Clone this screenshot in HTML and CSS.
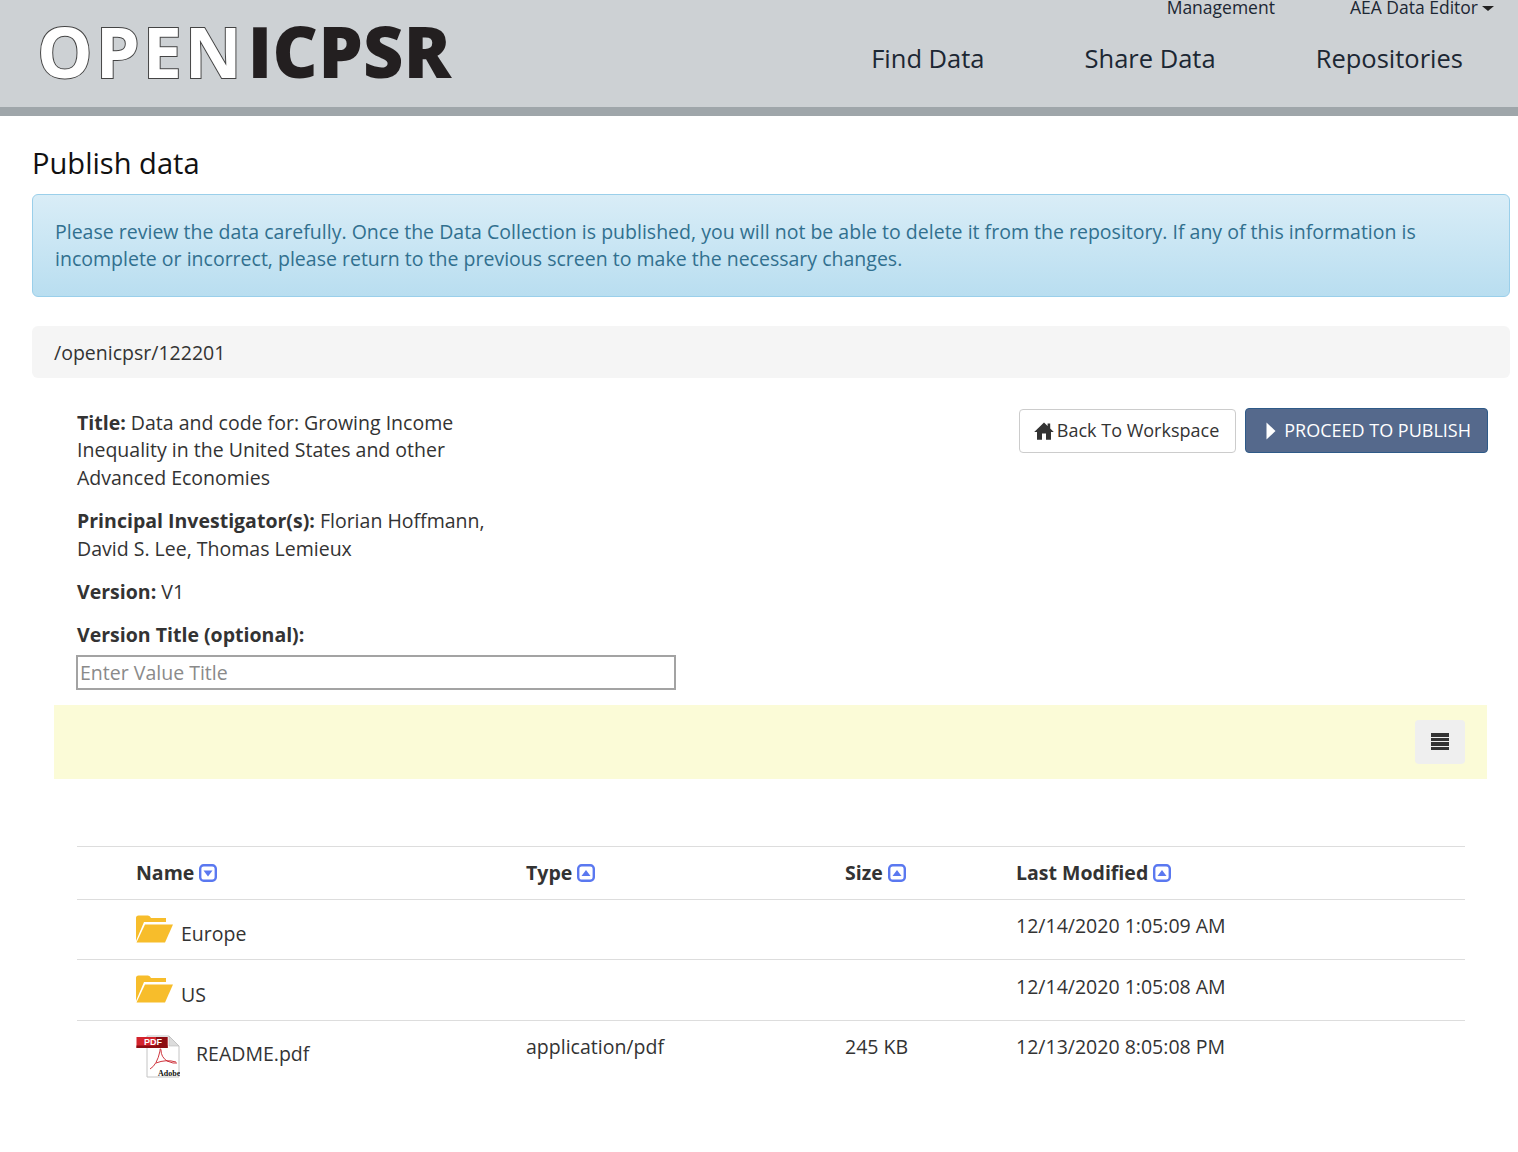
FILE: index.html
```html
<!DOCTYPE html>
<html>
<head>
  <title>Publish data - openICPSR</title>
  <link rel="stylesheet" href="styles.css">
</head>
<body>

  <header class="site-header">
    <div class="logo"><span class="logo-open">OPEN</span><span class="logo-icpsr">ICPSR</span></div>
    <div class="header-nav">
      <div class="util-nav">
        <a class="util-management">Management</a>
        <a class="util-user">AEA Data Editor<span class="caret"></span></a>
      </div>
      <nav class="main-nav">
        <a>Find Data</a>
        <a>Share Data</a>
        <a>Repositories</a>
      </nav>
    </div>
  </header>

  <main class="page">
    <h1>Publish data</h1>

    <div class="alert">Please review the data carefully. Once the Data Collection is published, you will not be able to delete it from the repository. If any of this information is incomplete or incorrect, please return to the previous screen to make the necessary changes.</div>

    <div class="breadcrumb">/openicpsr/122201</div>

    <section class="details">
      <div class="meta">
        <p><b>Title:</b> Data and code for: Growing Income Inequality in the United States and other Advanced Economies</p>
        <p><b>Principal Investigator(s):</b> Florian Hoffmann, David S. Lee, Thomas Lemieux</p>
        <p><b>Version:</b> V1</p>
        <p class="version-label"><b>Version Title (optional):</b></p>
        <input class="version-input" type="text" placeholder="Enter Value Title">
      </div>
      <div class="actions">
        <a class="btn btn-back">
          <svg class="icon-home" viewBox="0 0 20 18"><path d="M10 0.5 L13.6 4 V1.6 H16.2 V6.6 L19.8 10 H17 V17.8 H12 V11.5 H8 V17.8 H3 V10 H0.2 Z"/></svg>
          Back To Workspace
        </a>
        <a class="btn btn-publish">
          <svg class="icon-play" viewBox="0 0 10 18"><path d="M0.5 0.5 L9.5 9 L0.5 17.5 Z"/></svg>
          PROCEED TO PUBLISH
        </a>
      </div>
    </section>

    <div class="toolbar">
      <button class="list-btn"><span></span><span></span><span></span><span></span></button>
    </div>

    <table class="files">
      <colgroup>
        <col class="col-check"><col class="col-name"><col class="col-type"><col class="col-size"><col>
      </colgroup>
      <thead>
        <tr>
          <th></th>
          <th>Name <svg class="sort" viewBox="0 0 18 18"><rect x="1.2" y="1.2" width="15.6" height="15.6" rx="3.5"/><path class="arrow" d="M4.5 6.5 H13.5 L9 12.5 Z"/></svg></th>
          <th>Type <svg class="sort" viewBox="0 0 18 18"><rect x="1.2" y="1.2" width="15.6" height="15.6" rx="3.5"/><path class="arrow" d="M4.5 12 H13.5 L9 6 Z"/></svg></th>
          <th>Size <svg class="sort" viewBox="0 0 18 18"><rect x="1.2" y="1.2" width="15.6" height="15.6" rx="3.5"/><path class="arrow" d="M4.5 12 H13.5 L9 6 Z"/></svg></th>
          <th>Last Modified <svg class="sort" viewBox="0 0 18 18"><rect x="1.2" y="1.2" width="15.6" height="15.6" rx="3.5"/><path class="arrow" d="M4.5 12 H13.5 L9 6 Z"/></svg></th>
        </tr>
      </thead>
      <tbody>
        <tr class="row-europe">
          <td></td>
          <td><div class="file-name">
            <svg class="icon-folder" viewBox="0 0 37 28"><path d="M0 26 V3 Q0 0.5 2.5 0.5 H12 Q14 0.5 15 3 H30 V7 H8 Z"/><path d="M9 9.5 H37 L29 27.5 H0.5 Z"/></svg>
            <span class="folder-label">Europe</span>
          </div></td>
          <td></td><td></td>
          <td>12/14/2020 1:05:09 AM</td>
        </tr>
        <tr class="row-us">
          <td></td>
          <td><div class="file-name">
            <svg class="icon-folder" viewBox="0 0 37 28"><path d="M0 26 V3 Q0 0.5 2.5 0.5 H12 Q14 0.5 15 3 H30 V7 H8 Z"/><path d="M9 9.5 H37 L29 27.5 H0.5 Z"/></svg>
            <span class="folder-label">US</span>
          </div></td>
          <td></td><td></td>
          <td>12/14/2020 1:05:08 AM</td>
        </tr>
        <tr>
          <td></td>
          <td><div class="file-name">
            <svg class="icon-pdf" viewBox="0 0 44 44">
              <path d="M11 1 H33 L43 11 V42 H11 Z" fill="#fff" stroke="#c4c4c4"/>
              <path d="M33 1 L43 11 H33 Z" fill="#dcdcdc" stroke="#bbb" stroke-width="0.6"/>
              <rect x="0.5" y="2" width="31" height="11" fill="#d3232c"/>
              <rect x="20" y="2" width="11.5" height="11" fill="#8c0d12"/>
              <rect x="0.5" y="10.5" width="31" height="2.5" fill="#8c0d12"/>
              <text x="8" y="10" class="pdf-tag">PDF</text>
              <path d="M14 34 Q21 30 24 16 Q24 12 25 15 Q25 22 31 26 Q38 29 41 28 M20 28 Q30 24 40 27" fill="none" stroke="#c9202a" stroke-width="0.9"/>
              <text x="22" y="41" class="pdf-adobe">Adobe</text>
            </svg>
            <span>README.pdf</span>
          </div></td>
          <td>application/pdf</td>
          <td>245 KB</td>
          <td>12/13/2020 8:05:08 PM</td>
        </tr>
      </tbody>
    </table>
  </main>

</body>
</html>
```

FILE: styles.css
```css
body {
  margin: 0;
  font-family: "Open Sans", "Noto Sans", sans-serif;
  font-size: 19.53px;
  line-height: 27.4px;
  color: #333;
  background: #fff;
}

.site-header {
  display: flex;
  justify-content: space-between;
  height: 107px;
  background-color: #cdd1d4;
  border-bottom: 9px solid #9fa6aa;
  overflow: hidden;
}

.logo {
  padding: 4px 0 0 37px;
  font-size: 70px;
  line-height: 95px;
  white-space: nowrap;
}

.logo-open {
  color: #fff;
  -webkit-text-stroke: 2px #444;
  paint-order: stroke fill;
  font-weight: 700;
  letter-spacing: 3px;
}

.logo-icpsr {
  margin-left: 3px;
  color: #231f20;
  font-weight: 800;
  letter-spacing: 0.4px;
}

.header-nav {
  display: flex;
  flex-direction: column;
  align-items: flex-end;
}

.util-nav {
  display: flex;
  font-size: 17.5px;
  line-height: 22px;
  margin-top: -4px;
  color: #1c2733;
}

.util-management {
  margin-right: 75px;
}

.util-user {
  margin-right: 24px;
}

.caret {
  display: inline-block;
  margin-left: 4px;
  vertical-align: 3px;
  border-top: 5px solid #222;
  border-left: 6px solid transparent;
  border-right: 6px solid transparent;
}

.main-nav {
  display: flex;
  gap: 100px;
  margin: 23px 55px 0 0;
  font-size: 25.5px;
  line-height: 34px;
  color: #1c2733;
}

.page {
  padding: 0 8px 40px 32px;
}

h1 {
  margin: 28px 0 12px;
  font-size: 29.1px;
  line-height: 38px;
  font-weight: 400;
  color: #111;
}

.alert {
  padding: 23px 22px;
  height: 103px;
  box-sizing: border-box;
  color: #31708f;
  background: linear-gradient(to bottom, #d9edf7, #b9def0);
  border: 1px solid #9acfea;
  border-radius: 6px;
}

.breadcrumb {
  margin-top: 29px;
  padding: 13px 22px;
  height: 52px;
  box-sizing: border-box;
  background-color: #f5f5f5;
  border-radius: 6px;
  color: #333;
}

.details {
  display: flex;
  justify-content: space-between;
  padding: 31px 22px 0 45px;
}

.meta {
  width: 599px;
}

.meta p {
  margin: 0 0 16px;
  max-width: 420px;
}

.meta .version-label {
  margin-bottom: 6px;
  max-width: none;
}

.version-input {
  display: block;
  width: 600px;
  height: 35px;
  margin-left: -1px;
  box-sizing: border-box;
  padding: 0 2px;
  font: inherit;
  border: 2px solid #a3a3a3;
  background: #fff;
}

.version-input::placeholder {
  color: #8a8a8a;
}

.actions {
  display: flex;
  align-items: flex-start;
  gap: 9px;
  margin-top: -1px;
}

.btn {
  display: flex;
  align-items: center;
  box-sizing: border-box;
  font-size: 18px;
  border-radius: 4px;
  white-space: nowrap;
}

.btn-back {
  height: 44px;
  margin-top: 1px;
  padding: 0 16px 0 14px;
  gap: 3px;
  color: #333;
  background: #fff;
  border: 1px solid #ccc;
}

.icon-home {
  width: 20px;
  height: 18px;
  fill: #333;
}

.btn-publish {
  height: 45px;
  padding: 0 16px 0 20px;
  gap: 8px;
  color: #fff;
  background: #55698c;
  border: 1px solid #2e5a88;
}

.icon-play {
  width: 10px;
  height: 18px;
  fill: #fff;
}

.toolbar {
  display: flex;
  justify-content: flex-end;
  align-items: center;
  height: 74px;
  margin: 15px 23px 0 22px;
  padding-right: 22px;
  background-color: #fbfbd7;
}

.list-btn {
  display: flex;
  flex-direction: column;
  align-items: center;
  justify-content: center;
  gap: 1px;
  width: 50px;
  height: 44px;
  padding: 0;
  border: 0;
  border-radius: 4px;
  background-color: #efefef;
}

.list-btn span {
  width: 18px;
  height: 3.5px;
  background-color: #333;
}

.files {
  width: 1388px;
  margin: 67px 0 0 45px;
  border-collapse: collapse;
  table-layout: fixed;
}

.col-check {
  width: 59px;
}

.col-name {
  width: 390px;
}

.col-type {
  width: 319px;
}

.col-size {
  width: 171px;
}

.files th {
  height: 52px;
  padding: 0;
  text-align: left;
  font-weight: 700;
  border-top: 1px solid #ddd;
  border-bottom: 1px solid #ddd;
}

.files td {
  height: 60px;
  padding: 12px 0 0;
  box-sizing: border-box;
  vertical-align: top;
  border-bottom: 1px solid #ddd;
}

.files .row-us td {
  height: 61px;
  padding-top: 13px;
}

.files tbody tr:last-child td {
  border-bottom: 0;
}

.sort {
  width: 18px;
  height: 18px;
  vertical-align: -2px;
  fill: #fff;
  stroke: #5a78f0;
  stroke-width: 2.4;
}

.sort .arrow {
  fill: #5a78f0;
  stroke: none;
}

.file-name {
  display: flex;
  align-items: flex-start;
  gap: 8px;
  margin-top: 2px;
}

.row-europe .file-name {
  margin-top: 3px;
}

.folder-label {
  margin-top: 5px;
}

.row-us .folder-label {
  margin-top: 6px;
}

.icon-folder {
  width: 37px;
  height: 28px;
  fill: #f7bd2b;
}

.icon-pdf {
  width: 44px;
  height: 44px;
  margin-right: 8px;
  flex: none;
}

.icon-pdf + span {
  margin-top: 5px;
}

.pdf-tag {
  font-family: "Liberation Sans", sans-serif;
  font-size: 9px;
  font-weight: 700;
  fill: #fff;
}

.pdf-adobe {
  font-family: "Liberation Serif", serif;
  font-size: 8px;
  font-weight: 700;
  fill: #111;
}
```
